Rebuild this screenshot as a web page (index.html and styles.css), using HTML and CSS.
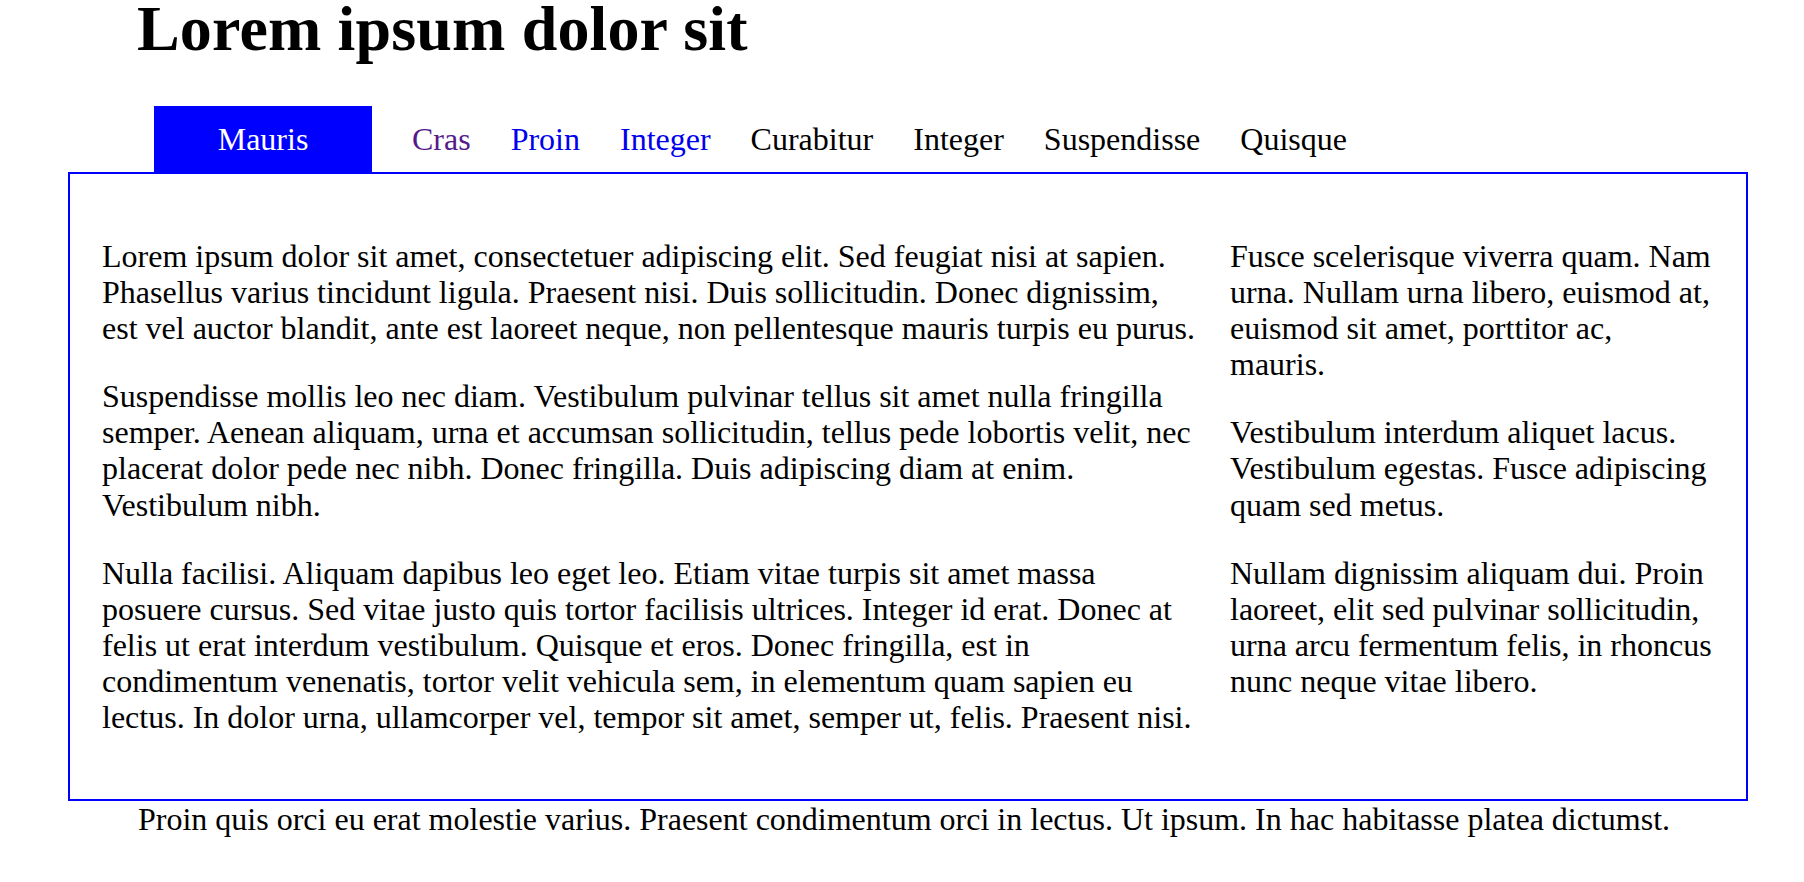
FILE: index.html
```html
<!DOCTYPE html>
<html lang="en">
<head>
<meta charset="utf-8">
<title>Lorem ipsum dolor sit</title>
<link rel="stylesheet" href="styles.css">
</head>
<body>
<h1 class="title">Lorem ipsum dolor sit</h1>
<ul class="tabs">
  <li class="tab tab-active"><a class="tab-link" href="#">Mauris</a></li>
  <li class="tab"><a class="tab-link visited" href="#">Cras</a></li>
  <li class="tab"><a class="tab-link link" href="#">Proin</a></li>
  <li class="tab"><a class="tab-link link" href="#">Integer</a></li>
  <li class="tab"><span class="tab-link">Curabitur</span></li>
  <li class="tab"><span class="tab-link">Integer</span></li>
  <li class="tab"><span class="tab-link">Suspendisse</span></li>
  <li class="tab"><span class="tab-link">Quisque</span></li>
</ul>
<div class="panel">
  <div class="main">
    <p>Lorem ipsum dolor sit amet, consectetuer adipiscing elit. Sed feugiat nisi at sapien. Phasellus varius tincidunt ligula. Praesent nisi. Duis sollicitudin. Donec dignissim, est vel auctor blandit, ante est laoreet neque, non pellentesque mauris turpis eu purus.</p>
    <p>Suspendisse mollis leo nec diam. Vestibulum pulvinar tellus sit amet nulla fringilla semper. Aenean aliquam, urna et accumsan sollicitudin, tellus pede lobortis velit, nec placerat dolor pede nec nibh. Donec fringilla. Duis adipiscing diam at enim. Vestibulum nibh.</p>
    <p>Nulla facilisi. Aliquam dapibus leo eget leo. Etiam vitae turpis sit amet massa posuere cursus. Sed vitae justo quis tortor facilisis ultrices. Integer id erat. Donec at felis ut erat interdum vestibulum. Quisque et eros. Donec fringilla, est in condimentum venenatis, tortor velit vehicula sem, in elementum quam sapien eu lectus. In dolor urna, ullamcorper vel, tempor sit amet, semper ut, felis. Praesent nisi.</p>
  </div>
  <div class="side">
    <p>Fusce scelerisque viverra quam. Nam urna. Nullam urna libero, euismod at, euismod sit amet, porttitor ac, mauris.</p>
    <p>Vestibulum interdum aliquet lacus. Vestibulum egestas. Fusce adipiscing quam sed metus.</p>
    <p>Nullam dignissim aliquam dui. Proin laoreet, elit sed pulvinar sollicitudin, urna arcu fermentum felis, in rhoncus nunc neque vitae libero.</p>
  </div>
</div>
<p class="footer">Proin quis orci eu erat molestie varius. Praesent condimentum orci in lectus. Ut ipsum. In hac habitasse platea dictumst.</p>
</body>
</html>
```
FILE: styles.css
```css
html, body {
  margin: 0;
  padding: 0;
  background: #ffffff;
}

body {
  font-family: "Liberation Serif", "Times New Roman", serif;
  font-size: 32px;
  line-height: 36.1px;
  color: #000000;
}

.title {
  margin: 0 0 0 137px;
  font-size: 64px;
  line-height: 57px;
  letter-spacing: 0.15px;
  font-weight: bold;
}

.tabs {
  list-style: none;
  margin: 49px 0 0 154px;
  padding: 0;
  display: flex;
  align-items: stretch;
  height: 66px;
}

.tab {
  margin-right: 40px;
  padding: 15px 0;
}

.tab-active {
  width: 218px;
  background: #0000ff;
  text-align: center;
}

.tab-link {
  text-decoration: none;
  color: #000000;
}

.tab-active .tab-link {
  color: #ffffff;
}

.tab-link.visited {
  color: #551a8b;
}

.tab-link.link {
  color: #0000ee;
}

.panel {
  box-sizing: border-box;
  width: 1680px;
  margin-left: 68px;
  border: 2px solid #0000ff;
  padding: 0 32px;
  display: grid;
  grid-template-columns: 1fr 484px;
  column-gap: 32px;
}

.main p,
.side p {
  margin: 32px 0;
}

.main,
.side {
  padding: 32px 0;
}

.footer {
  margin: 0 0 0 138px;
}
```
